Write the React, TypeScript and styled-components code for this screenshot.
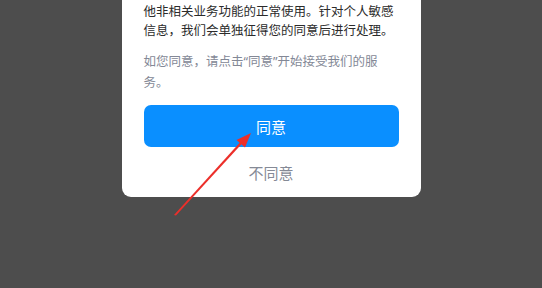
import { createGlobalStyle, styled } from 'styled-components'

const GlobalStyle = createGlobalStyle`
  html, body {
    margin: 0;
    padding: 0;
    background: #4d4d4d;
  }
  body {
    font-family: "Noto Sans", "Noto Sans CJK SC", sans-serif;
  }
`

const Screen = styled.div`
  position: relative;
  width: 542px;
  height: 288px;
  overflow: hidden;
  display: flex;
  justify-content: center;
  align-items: flex-start;
`

const Dialog = styled.div`
  width: 299px;
  box-sizing: border-box;
  margin-top: -20px;
  padding: 21.5px 22px 14px;
  background: #ffffff;
  border-radius: 0 0 9px 9px;
  display: flex;
  flex-direction: column;
`

const Paragraph = styled.p<{ $muted?: boolean }>`
  margin: 0 0 ${(p) => (p.$muted ? '12.5px' : '11px')};
  font-size: 12.5px;
  line-height: ${(p) => (p.$muted ? '21px' : '19px')};
  color: ${(p) => (p.$muted ? '#838896' : '#2b2b2b')};
`

const AgreeButton = styled.button`
  height: 42px;
  border: none;
  border-radius: 7px;
  background: #0a8fff;
  color: #ffffff;
  font-family: inherit;
  font-size: 15px;
  cursor: pointer;
`

const DeclineButton = styled.button`
  margin-top: 16px;
  height: 20px;
  padding: 0;
  border: none;
  background: transparent;
  color: #858a96;
  font-family: inherit;
  font-size: 15px;
  line-height: 20px;
  cursor: pointer;
`

const Annotation = styled.svg`
  position: absolute;
  left: 0;
  top: 0;
  pointer-events: none;
`

const App = () => {
  return (
    <>
      <GlobalStyle />
      <Screen>
        <Dialog>
          <Paragraph>
            他非相关业务功能的正常使用。针对个人敏感信息，我们会单独征得您的同意后进行处理。
          </Paragraph>
          <Paragraph $muted>如您同意，请点击“同意”开始接受我们的服务。</Paragraph>
          <AgreeButton>同意</AgreeButton>
          <DeclineButton>不同意</DeclineButton>
        </Dialog>
        <Annotation width="542" height="288" viewBox="0 0 542 288">
          <polygon points="174,215 242.6,139.4 244.4,141 176,215.6" fill="#ec2f2a" />
          <polygon points="251,133 236.5,140 245,147.5" fill="#ec2f2a" />
        </Annotation>
      </Screen>
    </>
  )
}

export default App
